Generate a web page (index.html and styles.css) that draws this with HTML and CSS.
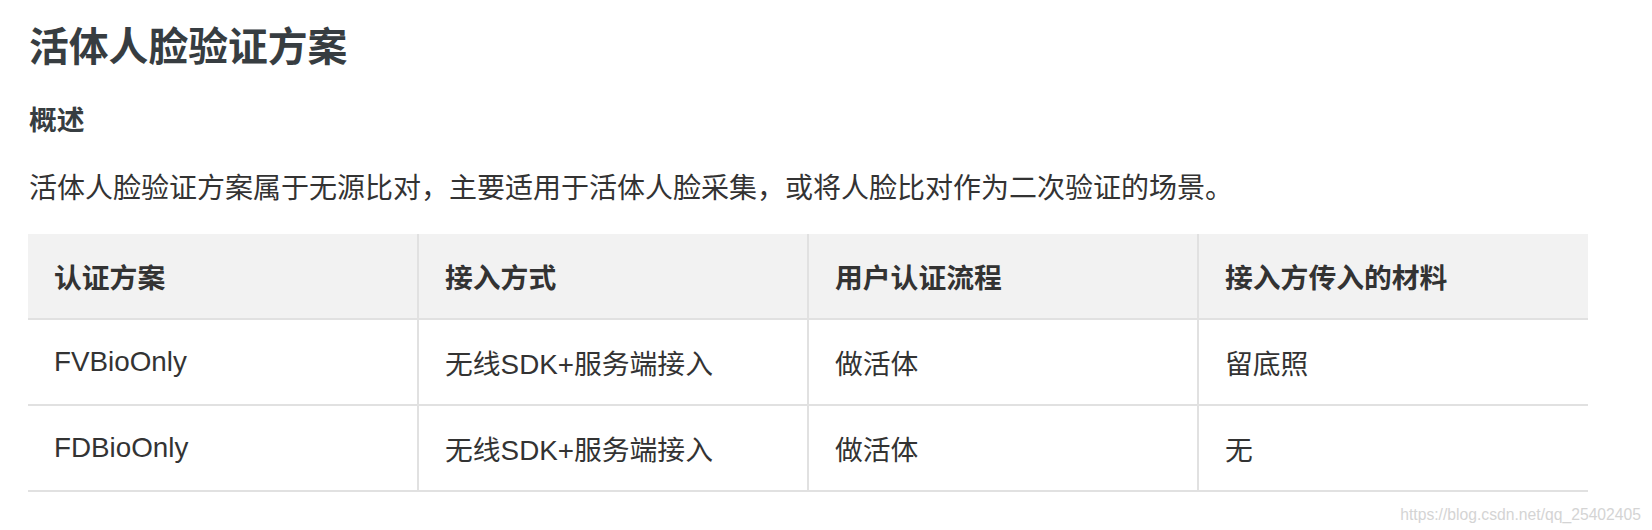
FILE: index.html
```html
<!DOCTYPE html>
<html lang="zh-CN">
<head>
<meta charset="utf-8">
<title>活体人脸验证方案</title>
<link rel="stylesheet" href="styles.css">
</head>
<body>
<main class="doc">
  <h1 class="doc-title">活体人脸验证方案</h1>
  <h3 class="doc-section">概述</h3>
  <p class="doc-text">活体人脸验证方案属于无源比对，主要适用于活体人脸采集，或将人脸比对作为二次验证的场景。</p>
  <table class="doc-table">
    <thead>
      <tr>
        <th>认证方案</th>
        <th>接入方式</th>
        <th>用户认证流程</th>
        <th>接入方传入的材料</th>
      </tr>
    </thead>
    <tbody>
      <tr>
        <td>FVBioOnly</td>
        <td>无线SDK+服务端接入</td>
        <td>做活体</td>
        <td>留底照</td>
      </tr>
      <tr>
        <td>FDBioOnly</td>
        <td>无线SDK+服务端接入</td>
        <td>做活体</td>
        <td>无</td>
      </tr>
    </tbody>
  </table>
</main>
<div class="watermark">https://blog.csdn.net/qq_25402405</div>
</body>
</html>
```
FILE: styles.css
```css
html, body {
  margin: 0;
  padding: 0;
  background: #ffffff;
}

body {
  font-family: "Liberation Sans", "Noto Sans CJK SC", sans-serif;
  color: #333333;
  width: 1652px;
  height: 530px;
  overflow: hidden;
  position: relative;
}

.doc {
  padding: 23px 0 0 28px;
}

.doc-title {
  margin: 0;
  font-size: 39.8px;
  line-height: 48px;
  font-weight: 700;
  color: #373d41;
  padding-left: 1px;
}

.doc-section {
  margin: 33px 0 0 0;
  font-size: 27.8px;
  line-height: 34px;
  font-weight: 700;
  color: #373d41;
  padding-left: 1px;
}

.doc-text {
  margin: 31px 0 0 0;
  font-size: 28px;
  line-height: 40px;
  color: #333333;
  padding-left: 1px;
}

.doc-table {
  margin-top: 25px;
  width: 1560px;
  border-collapse: collapse;
  table-layout: fixed;
  font-size: 27.8px;
  color: #333333;
}

.doc-table th,
.doc-table td {
  text-align: left;
  padding: 0 26px;
  border-left: 2px solid #e1e1e1;
  vertical-align: middle;
}

.doc-table th:first-child,
.doc-table td:first-child {
  border-left: none;
}

.doc-table th {
  height: 84px;
  background: #f2f2f2;
  font-weight: 700;
  border-bottom: 2px solid #e1e1e1;
}

.doc-table td {
  height: 84px;
  font-weight: 400;
  border-bottom: 2px solid #e1e1e1;
}

.watermark {
  position: absolute;
  right: 11px;
  top: 505px;
  font-family: "Liberation Sans", sans-serif;
  font-size: 15.7px;
  line-height: 20px;
  color: #d4d4d4;
}
```
